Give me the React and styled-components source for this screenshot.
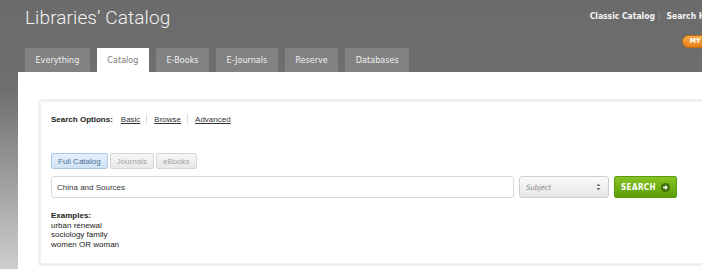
import React from 'react'
import styled, { createGlobalStyle } from 'styled-components'

const GlobalStyle = createGlobalStyle`
  html, body {
    margin: 0;
    overflow: hidden;
  }
  body {
    background: linear-gradient(#6b6b6b 0, #6f6f6f 90px, #9e9e9e 180px, #cecece 269px);
    font-family: "Liberation Sans", Arial, sans-serif;
  }
`

const Page = styled.div`
  width: 740px;
`

const Header = styled.header`
  display: flex;
  justify-content: space-between;
  height: 48px;
  padding: 0 8px 0 25px;
`

const Title = styled.h1`
  margin: 0;
  padding-top: 6px;
  font-family: Roboto, "DejaVu Sans", sans-serif;
  font-weight: 300;
  font-size: 19px;
  line-height: 24px;
  color: #f2f2f2;
  letter-spacing: 0.1px;
`

const Utility = styled.div`
  display: flex;
  flex-direction: column;
  align-items: flex-end;
  padding-top: 11px;
`

const UtilLinks = styled.div`
  display: flex;
  align-items: center;
  font-family: "DejaVu Sans Condensed", "DejaVu Sans", sans-serif;
  font-weight: bold;
  font-size: 8.5px;
  color: #f4f4f4;
  margin-right: 2px;
`

const UtilSep = styled.span`
  color: #9a9a9a;
  font-weight: normal;
  margin: 0 6px 0 3px;
`

const AccountPill = styled.span`
  margin-top: 14px;
  margin-right: -16px;
  padding: 1px 10px 1px 7px;
  border-radius: 7px;
  border: 1px solid #c66a10;
  background: linear-gradient(#f6ad4a, #e8801c);
  color: #fff;
  font-family: "DejaVu Sans Condensed", sans-serif;
  font-weight: bold;
  font-size: 7px;
  line-height: 9px;
`

const Tabs = styled.nav`
  display: flex;
  gap: 7px;
  padding-left: 25px;
  height: 24px;
`

const Tab = styled.div`
  display: flex;
  align-items: center;
  padding: 0 10.5px;
  background: ${p => (p.$active ? '#ffffff' : '#828282')};
  color: ${p => (p.$active ? '#7a7a7a' : '#efefef')};
  font-family: "DejaVu Sans Condensed", "DejaVu Sans", sans-serif;
  font-size: 9px;
`

const Content = styled.main`
  margin-left: 18px;
  background: #fff;
  padding: 27px 0 20px 20px;
`

const Panel = styled.section`
  width: 660px;
  border: 3px solid #f4f1ec;
  border-radius: 3px;
  padding: 12px 10px 14px 10px;
  font-size: 8px;
  color: #222;
`

const OptionsRow = styled.div`
  display: flex;
  align-items: center;
  height: 10px;
`

const OptionsLabel = styled.span`
  font-weight: bold;
  margin-right: 8px;
`

const OptionLink = styled.a`
  color: #333;
  text-decoration: underline;
`

const OptionSep = styled.span`
  width: 1px;
  height: 10px;
  background: #ddd;
  margin: 0 7px 0 6px;
`

const Scopes = styled.div`
  display: flex;
  gap: 2px;
  margin-top: 29px;
`

const Scope = styled.span`
  display: flex;
  align-items: center;
  height: 14px;
  padding: 0 6px;
  border-radius: 2px;
  border: 1px solid ${p => (p.$active ? '#a9cbe8' : '#d6d6d6')};
  background: ${p => (p.$active ? 'linear-gradient(#e4f0fb, #cfe3f5)' : 'linear-gradient(#f6f6f6, #e8e8e8)')};
  color: ${p => (p.$active ? '#4d6f92' : '#a2a2a2')};
`

const SearchRow = styled.div`
  display: flex;
  gap: 5px;
  margin-top: 7px;
  height: 22px;
`

const QueryInput = styled.div`
  box-sizing: border-box;
  width: 463px;
  display: flex;
  align-items: center;
  padding-left: 5px;
  border: 1px solid #d9d9d9;
  border-radius: 3px;
  color: #333;
`

const Select = styled.div`
  box-sizing: border-box;
  width: 90px;
  display: flex;
  align-items: center;
  justify-content: space-between;
  padding: 0 7px 0 6px;
  border: 1px solid #cfcfcf;
  border-radius: 3px;
  background: linear-gradient(#fafafa, #e6e6e6);
  color: #8a8a8a;
  font-style: italic;
  font-family: "DejaVu Sans Condensed", sans-serif;
  font-size: 7.5px;
`

const SearchButton = styled.div`
  box-sizing: border-box;
  width: 63px;
  display: flex;
  align-items: center;
  justify-content: center;
  gap: 5px;
  border: 1px solid #5b9a0c;
  border-radius: 2px;
  background: linear-gradient(#86c424, #5c9d08);
  color: #fff;
  font-family: "DejaVu Sans Condensed", sans-serif;
  font-weight: bold;
  font-size: 8px;
  letter-spacing: 0.4px;
`

const Examples = styled.div`
  margin-top: 13px;
  line-height: 9.5px;
  color: #222;
`

const ExamplesTitle = styled.div`
  font-weight: bold;
`

const Arrows = () => (
  <svg width="5" height="8" viewBox="0 0 5 8">
    <path d="M2.5 0.5 L4.5 3 L0.5 3 Z M2.5 7.5 L4.5 5 L0.5 5 Z" fill="#777" />
  </svg>
)

const GoIcon = () => (
  <svg width="9" height="9" viewBox="0 0 9 9">
    <circle cx="4.5" cy="4.5" r="4.5" fill="#3f6f06" />
    <path d="M2 4.5 H5.5 M4.2 2.8 L6 4.5 L4.2 6.2" stroke="#fff" strokeWidth="1.3" fill="none" />
  </svg>
)

const tabs = [
  { label: 'Everything' },
  { label: 'Catalog', active: true },
  { label: 'E-Books' },
  { label: 'E-Journals' },
  { label: 'Reserve' },
  { label: 'Databases' },
]

const examples = ['urban renewal', 'sociology family', 'women OR woman']

const App = () => (
  <Page>
    <GlobalStyle />
    <Header>
      <Title>Libraries’ Catalog</Title>
      <Utility>
        <UtilLinks>
          Classic Catalog
          <UtilSep>|</UtilSep>
          Search History
        </UtilLinks>
        <AccountPill>MY ACCOUNT</AccountPill>
      </Utility>
    </Header>
    <Tabs>
      {tabs.map(t => (
        <Tab key={t.label} $active={t.active}>
          {t.label}
        </Tab>
      ))}
    </Tabs>
    <Content>
      <Panel>
        <OptionsRow>
          <OptionsLabel>Search Options:</OptionsLabel>
          <OptionLink>Basic</OptionLink>
          <OptionSep />
          <OptionLink>Browse</OptionLink>
          <OptionSep />
          <OptionLink>Advanced</OptionLink>
        </OptionsRow>
        <Scopes>
          <Scope $active>Full Catalog</Scope>
          <Scope>Journals</Scope>
          <Scope>eBooks</Scope>
        </Scopes>
        <SearchRow>
          <QueryInput>China and Sources</QueryInput>
          <Select>
            Subject
            <Arrows />
          </Select>
          <SearchButton>
            SEARCH
            <GoIcon />
          </SearchButton>
        </SearchRow>
        <Examples>
          <ExamplesTitle>Examples:</ExamplesTitle>
          {examples.map(e => (
            <div key={e}>{e}</div>
          ))}
        </Examples>
      </Panel>
    </Content>
  </Page>
)

export default App
